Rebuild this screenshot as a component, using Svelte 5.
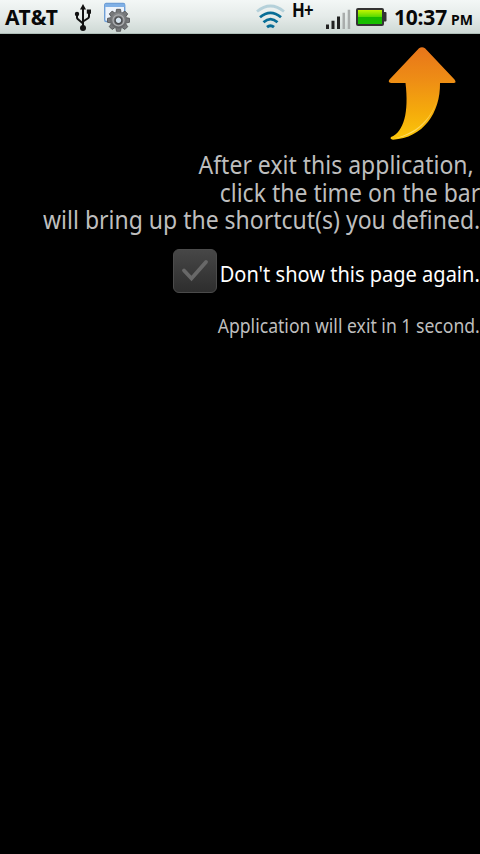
<script>
  const teeth = [0, 45, 90, 135, 180, 225, 270, 315];
</script>

<div class="screen">
  <header>
    <span class="carrier">AT&amp;T</span>
    <svg class="usb" width="18" height="28" viewBox="0 0 18 28">
      <g fill="none" stroke="#111" stroke-width="2">
        <path d="M9 5V24M3 11v3.500q0 1 1 1.800L9 20.500M15 9v4.500q0 1-1 1.800L9 18.500" />
      </g>
      <path d="M9 1l3 5.500H6z" fill="#111" />
      <circle cx="9" cy="25" r="3" fill="#111" />
      <circle cx="3" cy="11" r="2.200" fill="#111" />
      <rect x="12.800" y="6.500" width="4.200" height="4.200" fill="#111" />
    </svg>
    <svg class="settings" width="28" height="30" viewBox="0 0 28 30">
      <defs>
        <linearGradient id="gear" x2="0" y2="1">
          <stop offset="0" stop-color="#888a8c" />
          <stop offset="1" stop-color="#5f6163" />
        </linearGradient>
      </defs>
      <rect x="1.700" y="1.500" width="20" height="18" rx="1.500" fill="#edf3fa" stroke="#6f9fd6" stroke-width="1.400" />
      <path d="M2 2h19.500v3H2z" fill="#7fb0e6" />
      <g transform="translate(15.500 18.300)">
        {#each teeth as angle}
          <path d="M-2.700-7L-2-11H2L2.700-7z" transform="rotate({angle})" fill="#77797b" stroke="#4c4e50" stroke-width=".8" />
        {/each}
        <circle r="8.200" fill="url(#gear)" stroke="#6c6f71" stroke-width=".7" />
        <circle r="5.500" fill="none" stroke="#aaacae" stroke-width="1.300" />
        <circle r="3.300" fill="#d5e3ee" stroke="#4a4c4e" stroke-width="1.200" />
      </g>
    </svg>
    <svg class="wifi" width="30" height="26" viewBox="0 0 30 26" fill="none" stroke="#086d96" stroke-width="2.800">
      <path d="M1 7.500Q14.500-3.500 28 7.500" stroke="#b5d1da" />
      <path d="M4 13.300Q14.500 4.500 25 13.300" />
      <path d="M7.500 18.200Q14.500 12 21.500 18.200" />
      <path d="M11 23.200Q14.500 20.300 18 23.200" />
    </svg>
    <span class="network">H+</span>
    <svg class="signal" width="25" height="21" viewBox="0 0 25 21">
      <path d="M0 15.500h3V20H0zM5.500 11.800h3V20h-3zM11 7.500h3V20h-3z" fill="#222" />
      <path d="M16.500 3.800H19V20h-2.500zM21.700 .8h2.500V20h-2.500z" fill="#a9adac" />
    </svg>
    <svg class="battery" width="31" height="20" viewBox="0 0 31 20">
      <defs>
        <linearGradient id="charge" x2="0" y2="1">
          <stop offset="0" stop-color="#c4f500" />
          <stop offset=".5" stop-color="#55d900" />
          <stop offset=".52" stop-color="#18b900" />
          <stop offset="1" stop-color="#16c000" />
        </linearGradient>
      </defs>
      <rect y="1" width="28" height="18" rx="2" fill="#333" />
      <rect x="27" y="5" width="3.500" height="9.500" rx="1" fill="#333" />
      <rect x="2" y="3" width="24" height="14" fill="url(#charge)" />
    </svg>
    <span class="clock">10:37</span><span class="meridiem">PM</span>
  </header>

  <main>
    <svg class="arrow" width="70" height="96" viewBox="0 0 70 96">
      <defs>
        <linearGradient id="flame" x2="0" y2="1">
          <stop offset="0" stop-color="#e8751a" />
          <stop offset=".35" stop-color="#ee8d15" />
          <stop offset=".7" stop-color="#f5ab0b" />
          <stop offset="1" stop-color="#fbc70a" />
        </linearGradient>
        <linearGradient id="shine" x2="0" y2="1">
          <stop offset="0" stop-color="#ffd55a" stop-opacity="0" />
          <stop offset=".5" stop-color="#ffd55a" stop-opacity=".8" />
          <stop offset="1" stop-color="#ffe070" />
        </linearGradient>
      </defs>
      <path d="M32 2.300Q35 .3 38 2.300L67.500 33.500Q70 37 66.500 37H53C53.500 67 36 92 6 93.700Q2.500 93 4 91C17 86 22 66 18.500 37H4Q.5 36.500 2.500 33.500Z" fill="url(#flame)" />
      <path d="M52 41C50 67 34 86 7 92.500C33 89 50 69 52 41Z" fill="url(#shine)" />
    </svg>
    <div class="message">
      <p class="first">After exit this application,</p>
      <p class="second">click the time on the bar</p>
      <p class="third">will bring up the shortcut(s) you defined.</p>
    </div>
    <div class="option">
      <svg width="46" height="46" viewBox="0 0 46 46">
        <defs>
          <linearGradient id="box" x2="0" y2="1">
            <stop offset="0" stop-color="#474747" />
            <stop offset="1" stop-color="#2d2d2d" />
          </linearGradient>
        </defs>
        <rect x="1.500" y="1.500" width="43" height="43" rx="5.500" fill="url(#box)" stroke="#4b4b4b" />
        <path d="M12 22.500l7.500 8L34 14" fill="none" stroke="#686868" stroke-width="3.800" stroke-linecap="round" />
      </svg>
      <div class="label"><span>Don't show this page again.</span></div>
    </div>
    <p class="countdown">Application will exit in 1 second.</p>
  </main>
</div>

<style>
  :global(body) {
    margin: 0;
    background: #000;
  }
  .screen {
    width: 480px;
    height: 854px;
    overflow: hidden;
    background: #000;
    font-family: "Noto Sans", "Open Sans", sans-serif;
    white-space: nowrap;
  }
  header {
    display: flex;
    align-items: flex-start;
    box-sizing: border-box;
    height: 34px;
    padding-left: 5px;
    background: linear-gradient(#f3f7f6, #e5ebe9 50%, #ced9d5);
    border-bottom: 1px solid #aebdb7;
    color: #080808;
    font-weight: 700;
  }
  header svg,
  header span {
    flex: none;
  }
  .carrier {
    width: 69px;
    font-size: 21px;
    line-height: 34px;
    letter-spacing: 0.5px;
  }
  .usb {
    margin-top: 3px;
  }
  .settings {
    margin: 2px 0 0 11px;
  }
  .wifi {
    margin: 4px 0 0 125px;
  }
  .network {
    width: 24px;
    margin: -1px 10px 0 6px;
    font: 700 19px/22px "Noto Sans", sans-serif;
    letter-spacing: -1px;
    transform: scaleX(0.88);
    transform-origin: left;
  }
  .signal {
    margin-top: 9px;
  }
  .battery {
    margin: 7px 0 0 5px;
  }
  .clock {
    width: 57px;
    margin-left: 7px;
    font-size: 21px;
    line-height: 34px;
    letter-spacing: -0.2px;
  }
  .meridiem {
    font-size: 14px;
    line-height: 39px;
  }
  main {
    display: flex;
    flex-direction: column;
    align-items: flex-end;
    color: #bebebe;
  }
  .arrow {
    margin: 12px 23px 9px 0;
  }
  p {
    margin: 0;
  }
  p,
  .label span {
    transform: scaleX(0.917);
    transform-origin: right;
  }
  .message {
    font-size: 25px;
    line-height: 27.500px;
    text-align: right;
  }
  .message p {
    transform: scaleX(0.92);
  }
  .first {
    padding-right: 7px;
  }
  .option {
    display: flex;
    height: 46px;
    margin-top: 14.500px;
    color: #fff;
    font-size: 22px;
    line-height: 50px;
  }
  .label {
    display: flex;
    justify-content: flex-end;
    width: 262px;
  }
  .label span {
    flex: none;
    transform: scaleX(0.91);
  }
  .countdown {
    margin-top: 19px;
    font-size: 19.200px;
    line-height: 25px;
  }
</style>
